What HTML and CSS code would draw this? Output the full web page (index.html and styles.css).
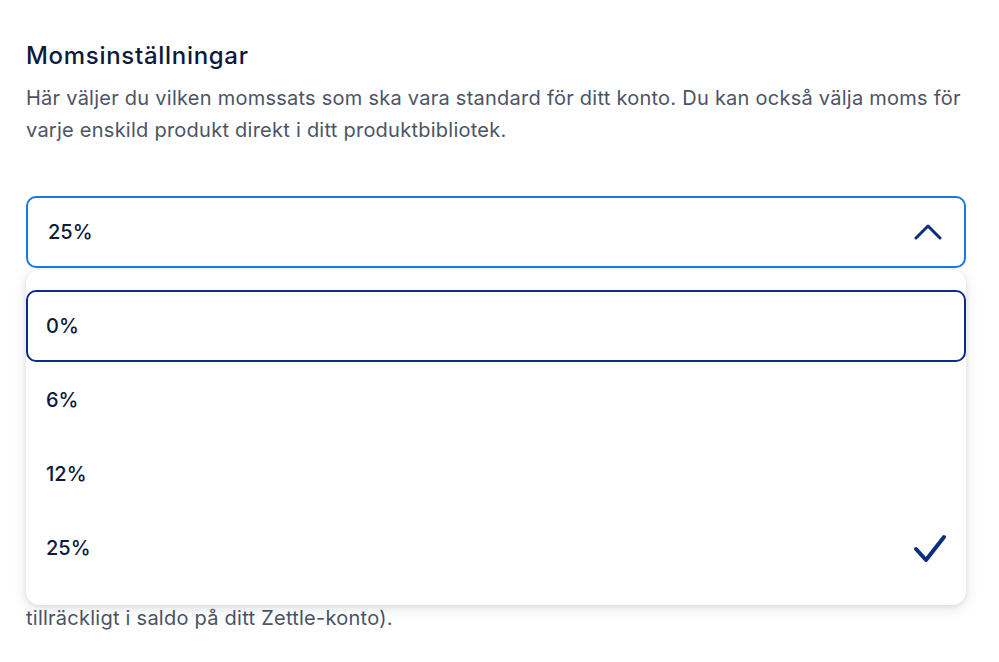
FILE: index.html
```html
<!DOCTYPE html>
<html lang="sv">
<head>
<meta charset="utf-8">
<title>Momsinställningar</title>
<link rel="stylesheet" href="styles.css">
</head>
<body>
<main class="page">
  <h1 class="title">Momsinställningar</h1>
  <p class="desc">Här väljer du vilken momssats som ska vara standard för ditt konto. Du kan också välja moms för varje enskild produkt direkt i ditt produktbibliotek.</p>

  <div class="field">
    <div class="select">
      <span class="select-value">25%</span>
      <svg class="chevron" width="28" height="18" viewBox="0 0 28 18" aria-hidden="true">
        <path d="M2 15 L14 3 L26 15" fill="none" stroke="#0b2e83" stroke-width="3" stroke-linecap="round" stroke-linejoin="round"/>
      </svg>
    </div>

    <ul class="menu">
      <li class="option option-focus">0%</li>
      <li class="option">6%</li>
      <li class="option">12%</li>
      <li class="option">25%
        <svg class="check" width="34" height="30" viewBox="0 0 34 30" aria-hidden="true">
          <path d="M3 16 L13 27 L31 4" fill="none" stroke="#0b2e83" stroke-width="4" stroke-linecap="round" stroke-linejoin="round"/>
        </svg>
      </li>
    </ul>

    <p class="desc after">tillräckligt i saldo på ditt Zettle-konto).</p>
  </div>
</main>
</body>
</html>
```

FILE: styles.css
```css
* { box-sizing: border-box; }

html, body {
  margin: 0;
  padding: 0;
  background: #ffffff;
}

body {
  font-family: Inter, "Noto Sans", "Liberation Sans", sans-serif;
  color: #0e1a3a;
}

.page {
  width: 940px;
  margin-left: 26px;
  padding-top: 40px;
}

.title {
  margin: 0;
  font-size: 24px;
  line-height: 32px;
  font-weight: 500;
  color: #0c1a3d;
  letter-spacing: 0.7px;
}

.desc {
  margin: 10px 0 0;
  font-size: 20px;
  line-height: 32px;
  color: #4a5467;
  letter-spacing: 0.25px;
}

.field {
  position: relative;
  margin-top: 50px;
}

.select {
  height: 72px;
  border: 2px solid #1a78e6;
  border-radius: 10px;
  padding: 0 22px 0 20px;
  display: flex;
  align-items: center;
  justify-content: space-between;
  background: #fff;
}

.select-value {
  font-size: 20px;
  color: #0e1a3a;
  font-weight: 450;
}

.chevron { display: block; }

.menu {
  position: absolute;
  top: 74px;
  left: 0;
  width: 940px;
  margin: 0;
  padding: 20px 0 21px;
  list-style: none;
  background: #fff;
  border-radius: 14px;
  box-shadow: 0 4px 14px rgba(20, 30, 60, 0.12), 0 1px 4px rgba(20, 30, 60, 0.08);
  display: flex;
  flex-direction: column;
  gap: 2px;
  z-index: 2;
}

.option {
  height: 72px;
  border: 2px solid transparent;
  border-radius: 10px;
  padding: 0 17px 0 18px;
  display: flex;
  align-items: center;
  justify-content: space-between;
  font-size: 20px;
  font-weight: 450;
  color: #0e1a3a;
}

.option-focus {
  border-color: #0b2e83;
}

.check { display: block; }

.after {
  margin-top: 334px;
}
```
